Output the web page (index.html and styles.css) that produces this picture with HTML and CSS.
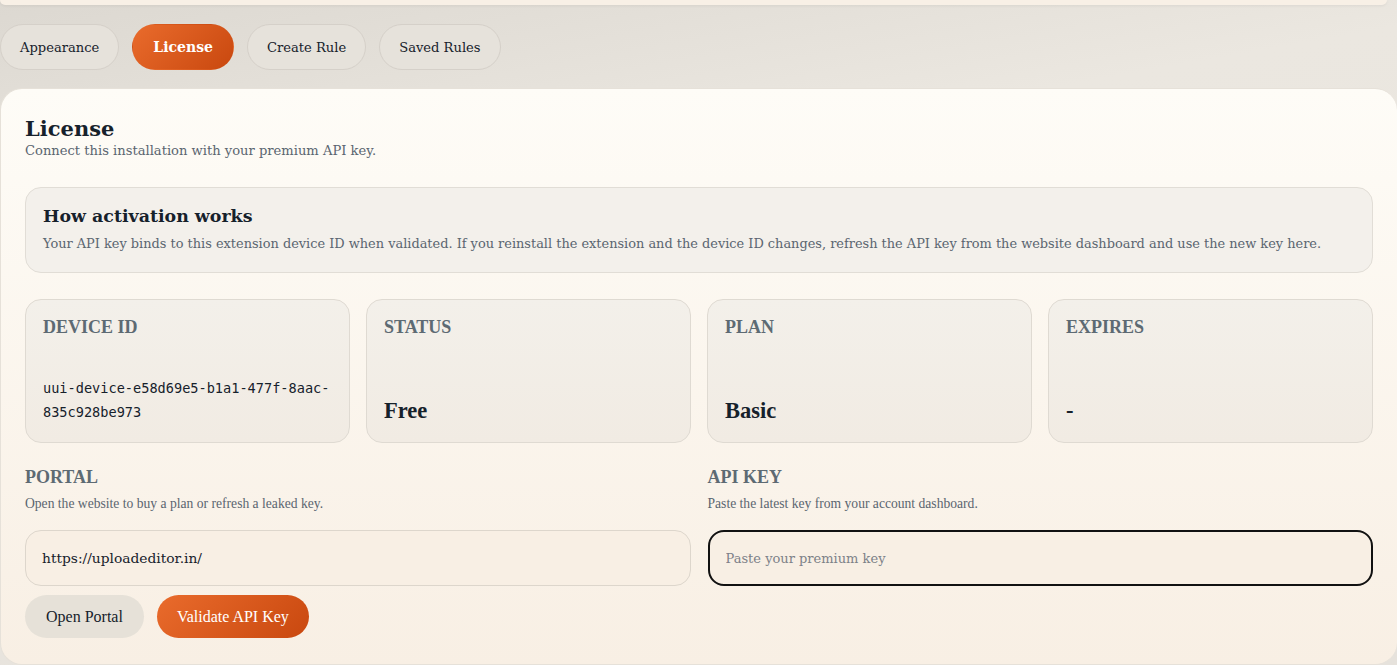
FILE: index.html
```html
<!DOCTYPE html>
<html lang="en">
<head>
  <meta charset="UTF-8">
  <title>License</title>
  <link rel="stylesheet" href="styles.css">
</head>

<body>
  <div class="top-card"></div>

  <nav class="tabs">
    <button class="tab">Appearance</button>
    <button class="tab active">License</button>
    <button class="tab">Create Rule</button>
    <button class="tab">Saved Rules</button>
  </nav>

  <main class="panel">
    <h1>License</h1>
    <p class="subtitle">Connect this installation with your premium API key.</p>

    <!-- How it works -->
    <div class="info-box">
      <h2>How activation works</h2>
      <p>Your API key binds to this extension device ID when validated. If you reinstall the extension and the device ID changes, refresh the API key from the website dashboard and use the new key here.</p>
    </div>

    <!-- Stats -->
    <section class="stat-grid">
      <div class="stat-card">
        <span class="stat-label">Device ID</span>
        <code class="device-id">uui-device-e58d69e5-b1a1-477f-8aac-835c928be973</code>
      </div>
      <div class="stat-card">
        <span class="stat-label">Status</span>
        <strong class="stat-value">Free</strong>
      </div>
      <div class="stat-card">
        <span class="stat-label">Plan</span>
        <strong class="stat-value">Basic</strong>
      </div>
      <div class="stat-card">
        <span class="stat-label">Expires</span>
        <strong class="stat-value">-</strong>
      </div>
    </section>

    <!-- Fields -->
    <section class="field-grid">
      <div class="field">
        <span class="field-label">Portal</span>
        <p class="field-desc">Open the website to buy a plan or refresh a leaked key.</p>
        <input class="text-input" type="text" value="https://uploadeditor.in/">
        <div class="actions">
          <button class="btn">Open Portal</button>
          <button class="btn primary">Validate API Key</button>
        </div>
      </div>
      <div class="field">
        <span class="field-label">API Key</span>
        <p class="field-desc">Paste the latest key from your account dashboard.</p>
        <input class="text-input focused" type="text" placeholder="Paste your premium key">
      </div>
    </section>
  </main>
</body>
</html>
```

FILE: styles.css
```css
body {
  margin: 0;
  font-family: "DejaVu Serif", serif;
  color: #16212b;
  background: linear-gradient(170deg, #dcd8d1 0%, #ebe7e0 30%, #e6e2dc 100%);
  min-height: 665px;
}

.top-card {
  height: 5px;
  margin-right: 10px;
  background: #f8f0e6;
  border-radius: 0 0 18px 18px;
  box-shadow: 0 1px 3px rgba(0, 0, 0, 0.06);
}

.tabs {
  display: flex;
  gap: 13px;
  margin-top: 19px;
}

.tab {
  height: 46px;
  padding: 0 19px;
  font-family: "DejaVu Serif", serif;
  font-size: 13.1px;
  color: #16212b;
  background: #e6e2db;
  border: 1px solid #d5d0c9;
  border-radius: 23px;
}

.tab.active {
  padding: 0 20px;
  font-weight: bold;
  font-size: 14px;
  color: #fff;
  border-color: transparent;
  background: linear-gradient(135deg, #e96b2c, #c9480f);
}

.panel {
  margin-top: 18px;
  padding: 27px 24px 26px;
  background: linear-gradient(180deg, #fefcf7 0%, #f8efe4 100%);
  border: 1px solid #e6e1d9;
  border-right: none;
  border-radius: 22px;
}

.panel h1 {
  margin: 0;
  font-size: 21px;
  line-height: 26px;
}

.subtitle {
  margin: 0;
  font-size: 13.1px;
  line-height: 18px;
  color: #5a6570;
}

.info-box {
  margin-top: 27px;
  padding: 17px 17px 19px;
  background: #f3f0eb;
  border: 1px solid #e1ddd6;
  border-radius: 16px;
}

.info-box h2 {
  margin: 0;
  font-size: 17.4px;
  line-height: 22px;
}

.info-box p {
  margin: 8px 0 0;
  font-size: 12.92px;
  line-height: 18px;
  color: #5a6570;
}

.stat-grid {
  display: grid;
  grid-template-columns: repeat(4, 1fr);
  gap: 16px;
  margin-top: 26px;
}

.stat-card {
  height: 144px;
  box-sizing: border-box;
  display: flex;
  flex-direction: column;
  justify-content: space-between;
  padding: 17px 17px 18px;
  background: linear-gradient(180deg, #f3f0ea, #f1ebe3);
  border: 1px solid #dfdad2;
  border-radius: 16px;
}

.stat-label,
.field-label {
  font-family: "Liberation Serif", serif;
  font-weight: bold;
  font-size: 18px;
  line-height: 20px;
  text-transform: uppercase;
  color: #5d6a73;
}

.stat-value {
  font-family: "Liberation Serif", serif;
  font-size: 22.5px;
  line-height: 26px;
}

.device-id {
  font-family: "DejaVu Sans Mono", monospace;
  font-size: 13.6px;
  line-height: 24px;
  color: #16212b;
  word-break: break-all;
}

.field-grid {
  display: grid;
  grid-template-columns: 1fr 1fr;
  gap: 17px;
  margin-top: 24px;
}

.field {
  display: flex;
  flex-direction: column;
}

.field-desc {
  margin: 8px 0 0;
  font-family: "Liberation Serif", serif;
  font-size: 13.6px;
  line-height: 18px;
  color: #5a6570;
}

.text-input {
  height: 56px;
  box-sizing: border-box;
  margin-top: 17px;
  padding: 0 16px;
  font-family: "DejaVu Serif", serif;
  font-size: 13.8px;
  color: #16212b;
  background: #f8efe4;
  border: 1px solid #ddd6cc;
  border-radius: 16px;
  outline: none;
}

.text-input.focused {
  border: 2px solid #111;
}

.text-input::placeholder {
  font-size: 13px;
  color: #7d8188;
}

.actions {
  display: flex;
  gap: 13px;
  margin-top: 9px;
}

.btn {
  height: 43px;
  padding: 0 21px;
  font-family: "Liberation Serif", serif;
  font-size: 16px;
  color: #16212b;
  background: #e6e1d8;
  border: none;
  border-radius: 22px;
}

.btn.primary {
  padding: 0 20px;
  color: #fff;
  background: linear-gradient(135deg, #e96b2c, #c9480f);
}
```
